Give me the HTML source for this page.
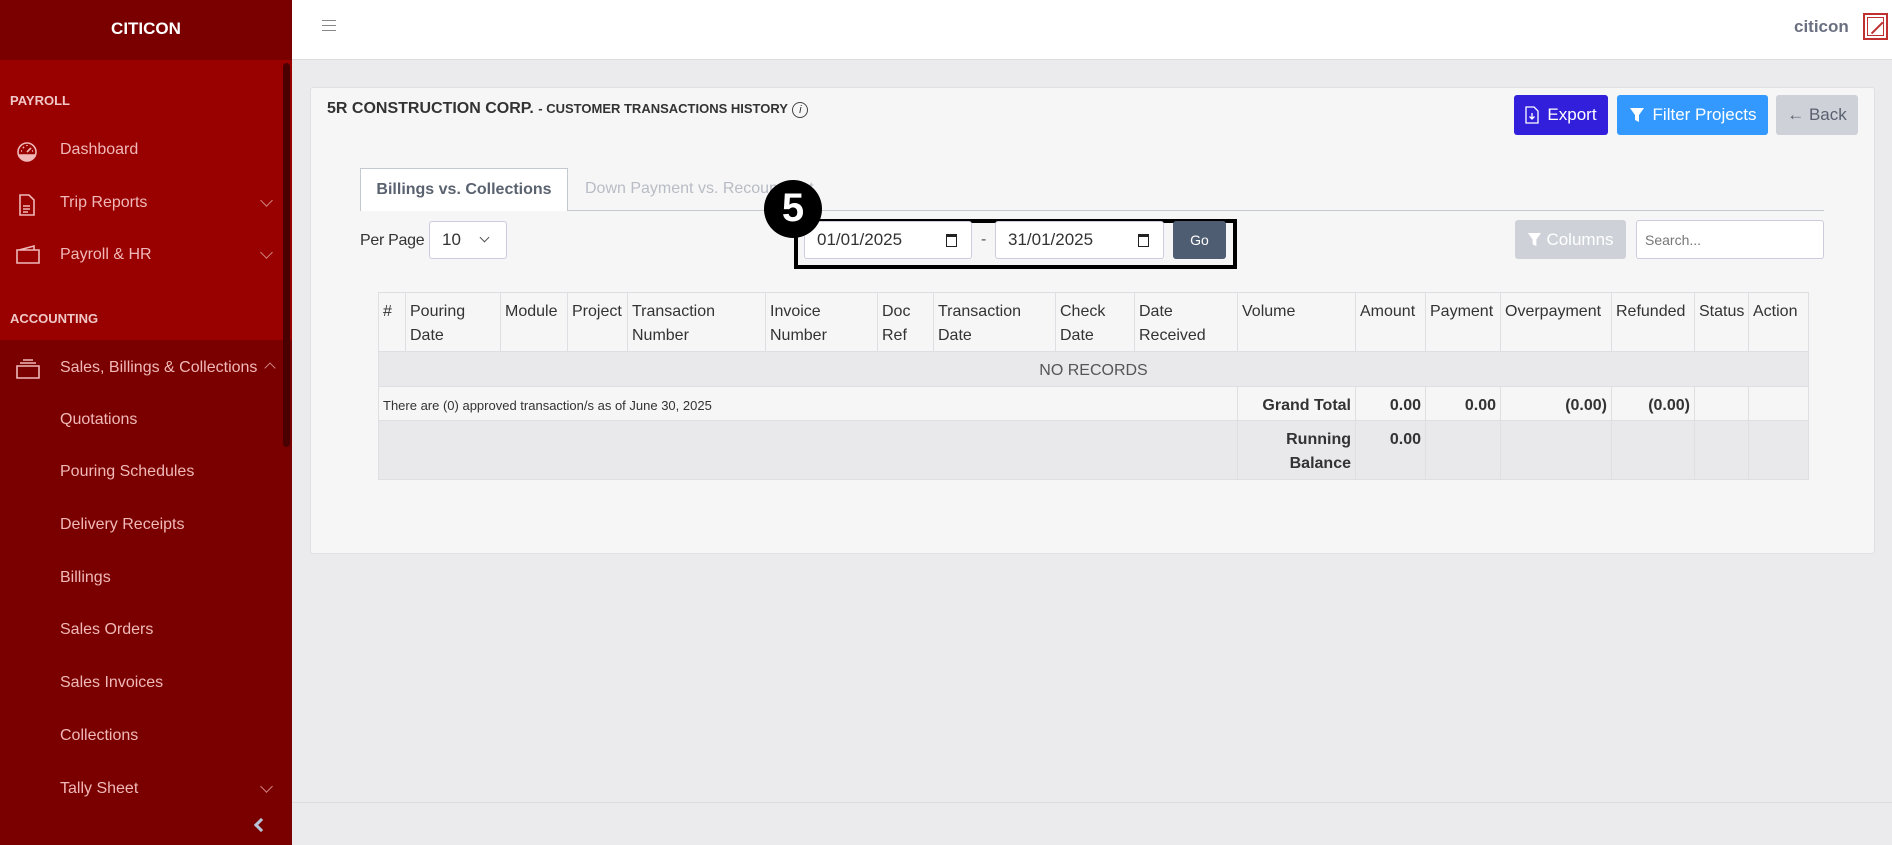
<!DOCTYPE html>
<html><head><meta charset="utf-8"><style>
*{box-sizing:border-box;margin:0;padding:0}
body{width:1892px;height:845px;overflow:hidden;background:#ebebed;font-family:"Liberation Sans",sans-serif;position:relative}
.abs{position:absolute}
#sb{left:0;top:0;width:292px;height:845px;background:#7a0000}
#sbtop{left:0;top:0;width:292px;height:60px;background:#7a0000;color:#fff;font-weight:bold;font-size:17px;text-align:center;line-height:58px}
#sbred{left:0;top:60px;width:292px;height:280px;background:#990000}
.sec{color:#f0c8c8;font-weight:bold;font-size:13px;left:10px}
.it{color:#f0b8b8;font-size:16px;left:60px}
.chev{left:262px;width:9px;height:9px;border-right:1px solid #d08080;border-bottom:1px solid #d08080;transform:rotate(45deg)}
#top{left:292px;top:0;width:1600px;height:60px;background:#fff;border-bottom:1px solid #dcdce0}
#card{left:310px;top:87px;width:1565px;height:467px;background:#f6f6f6;border:1px solid #e0e0e4;border-radius:3px}
.btn{color:#fff;font-size:17px;border-radius:3px;display:flex;align-items:center;justify-content:center;gap:8px}
.inp{background:#fff;border:1px solid #ccd;border-radius:3px;font-size:17px;color:#333;display:flex;align-items:center}
table{border-collapse:collapse;position:absolute;left:378px;top:292px;font-size:16px;color:#333;table-layout:fixed;width:1430px}
td{border:1px solid #dedee3;vertical-align:top;padding:7px 4px 2px;line-height:24px}
</style></head><body>
<div id="sb" class="abs"></div>
<div id="sbred" class="abs"></div>
<div id="sbtop" class="abs">CITICON</div>
<div class="abs" style="left:283px;top:63px;width:7px;height:384px;background:#4a0000;border-radius:4px"></div>
<div class="abs sec" style="top:93px">PAYROLL</div>
<svg class="abs" style="left:15px;top:140px" width="24" height="24" viewBox="0 0 24 24" fill="none" stroke="#f0b8b8" stroke-width="1.6"><circle cx="12" cy="12" r="9"/><path d="M12 12l4-4M6 11h1M8 7l1 1M12 5v1M17 11h1" /><path d="M4 15h16a9 9 0 0 1-16 0z" fill="#f0b8b8"/></svg>
<div class="abs it" style="top:141px">Dashboard</div>
<svg class="abs" style="left:17px;top:193px" width="20" height="24" viewBox="0 0 20 24" fill="none" stroke="#f0b8b8" stroke-width="1.6"><path d="M3 2h9l5 5v15H3z M6 13h7M6 16h7M6 19h5"/></svg>
<div class="abs it" style="top:194px">Trip Reports</div><div class="abs chev" style="top:196px"></div>
<svg class="abs" style="left:15px;top:243px" width="26" height="22" viewBox="0 0 26 22" fill="none" stroke="#f0b8b8" stroke-width="1.6"><path d="M2 7h22v13H2z M4 7l15-4v4"/></svg>
<div class="abs it" style="top:246px">Payroll &amp; HR</div><div class="abs chev" style="top:248px"></div>
<div class="abs sec" style="top:311px">ACCOUNTING</div>
<svg class="abs" style="left:15px;top:358px" width="26" height="22" viewBox="0 0 26 22" fill="none" stroke="#f0b8b8" stroke-width="1.6"><path d="M2 8h22v12H2z M5 5h16 M8 2h10"/></svg>
<div class="abs it" style="top:359px">Sales, Billings &amp; Collections</div>
<div class="abs" style="left:266px;top:364px;width:8px;height:8px;border-left:1px solid #d08080;border-top:1px solid #d08080;transform:rotate(45deg)"></div>
<div class="abs it" style="top:411px">Quotations</div>
<div class="abs it" style="top:463px">Pouring Schedules</div>
<div class="abs it" style="top:516px">Delivery Receipts</div>
<div class="abs it" style="top:569px">Billings</div>
<div class="abs it" style="top:621px">Sales Orders</div>
<div class="abs it" style="top:674px">Sales Invoices</div>
<div class="abs it" style="top:727px">Collections</div>
<div class="abs it" style="top:780px">Tally Sheet</div><div class="abs chev" style="top:782px"></div>
<div class="abs" style="left:256px;top:820px;width:10px;height:10px;border-left:3px solid #b8c4d8;border-bottom:3px solid #b8c4d8;transform:rotate(45deg)"></div>

<div id="top" class="abs"></div>
<div class="abs" style="left:322px;top:20px;width:14px;height:11px;border-top:1.5px solid #888;border-bottom:1.5px solid #888"><div style="margin-top:3.5px;border-top:1.5px solid #888"></div></div>
<div class="abs" style="left:1794px;top:17px;font-weight:bold;font-size:17px;color:#6a7080">citicon</div>
<div class="abs" style="left:1863px;top:13px;width:25px;height:27px;border:2px solid #c03030;padding:2px"><div style="width:100%;height:100%;border:1.5px solid #c03030;position:relative"><div style="position:absolute;left:1px;top:9px;width:16px;height:1.5px;background:#c03030;transform:rotate(-45deg)"></div></div></div>
<div class="abs" style="left:292px;top:802px;width:1600px;height:1px;background:#dcdce0"></div>

<div id="card" class="abs"></div>
<div class="abs" style="left:327px;top:100px;font-weight:bold;font-size:16px;color:#333">5R CONSTRUCTION CORP. <span style="font-size:13px">- CUSTOMER TRANSACTIONS HISTORY</span> <span style="display:inline-block;width:16px;height:16px;border:1px solid #444;border-radius:50%;font-size:11px;text-align:center;line-height:14px;font-style:italic;font-weight:normal">i</span></div>
<div class="abs btn" style="left:1514px;top:95px;width:94px;height:40px;background:#321fdb"><svg width="14" height="18" viewBox="0 0 14 18" fill="none" stroke="#fff" stroke-width="1.3"><path d="M1 1h8l4 4v12H1z M7 7v6M4.5 10.5L7 13l2.5-2.5"/></svg>Export</div>
<div class="abs btn" style="left:1617px;top:95px;width:151px;height:40px;background:#39f"><svg width="16" height="16" viewBox="0 0 16 16"><path d="M1 1h14l-5 7v7l-4-2V8z" fill="#fff"/></svg>Filter Projects</div>
<div class="abs btn" style="left:1776px;top:95px;width:82px;height:40px;background:#ced2d8;color:#5a6070">← Back</div>

<div class="abs" style="left:360px;top:210px;width:1464px;height:1px;background:#c4c9d0"></div>
<div class="abs" style="left:360px;top:168px;width:208px;height:43px;background:#fff;border:1px solid #c4c9d0;border-bottom:none;font-weight:bold;font-size:16px;color:#5a6270;text-align:center;line-height:42px">Billings vs. Collections</div>
<div class="abs" style="left:585px;top:180px;font-size:16px;color:#b8bcc4">Down Payment vs. Recoupment</div>

<div class="abs" style="left:360px;top:232px;font-size:16px;color:#333;letter-spacing:-0.3px">Per Page</div>
<div class="abs inp" style="left:429px;top:221px;width:78px;height:38px;padding-left:12px">10<span style="margin-left:20px;display:inline-block;width:7px;height:7px;border-right:1.3px solid #555;border-bottom:1.3px solid #555;transform:rotate(45deg);margin-top:-5px"></span></div>

<div class="abs" style="left:794px;top:219px;width:443px;height:50px;border:4px solid #000"></div>
<div class="abs inp" style="left:804px;top:221px;width:168px;height:38px;padding-left:12px">01/01/2025<span style="margin-left:auto;margin-right:14px;width:11px;height:13px;border:1.5px solid #222;border-top-width:3px"></span></div>
<div class="abs" style="left:981px;top:231px;color:#555;font-size:16px">-</div>
<div class="abs inp" style="left:995px;top:221px;width:169px;height:38px;padding-left:12px">31/01/2025<span style="margin-left:auto;margin-right:14px;width:11px;height:13px;border:1.5px solid #222;border-top-width:3px"></span></div>
<div class="abs btn" style="left:1173px;top:221px;width:53px;height:38px;background:#4f5d73;font-size:14px">Go</div>
<div class="abs" style="left:764px;top:180px;width:58px;height:58px;border-radius:50%;background:#000;color:#fff;font-weight:bold;font-size:40px;text-align:center;line-height:56px">5</div>

<div class="abs btn" style="left:1515px;top:220px;width:111px;height:39px;background:#ced2d8;gap:4px"><svg width="15" height="15" viewBox="0 0 16 16"><path d="M1 1h14l-5 7v7l-4-2V8z" fill="#fff"/></svg>Columns</div>
<div class="abs inp" style="left:1636px;top:220px;width:188px;height:39px;padding-left:8px;font-size:14px;color:#777">Search...</div>

<table>
<colgroup><col style="width:27px"><col style="width:95px"><col style="width:67px"><col style="width:60px"><col style="width:138px"><col style="width:112px"><col style="width:56px"><col style="width:122px"><col style="width:79px"><col style="width:103px"><col style="width:118px"><col style="width:70px"><col style="width:75px"><col style="width:111px"><col style="width:83px"><col style="width:54px"><col style="width:60px"></colgroup>
<tr style="height:59px"><td>#</td><td>Pouring Date</td><td>Module</td><td>Project</td><td>Transaction Number</td><td>Invoice Number</td><td>Doc Ref</td><td>Transaction Date</td><td>Check Date</td><td>Date Received</td><td>Volume</td><td>Amount</td><td>Payment</td><td>Overpayment</td><td>Refunded</td><td>Status</td><td>Action</td></tr>
<tr style="height:35px;background:#e9e9ec"><td colspan="17" style="text-align:center;color:#555">NO RECORDS</td></tr>
<tr style="height:34px"><td colspan="10" style="font-size:13px;vertical-align:middle">There are (0) approved transaction/s as of June 30, 2025</td><td style="text-align:right;font-weight:bold">Grand Total</td><td style="text-align:right;font-weight:bold">0.00</td><td style="text-align:right;font-weight:bold">0.00</td><td style="text-align:right;font-weight:bold">(0.00)</td><td style="text-align:right;font-weight:bold">(0.00)</td><td></td><td></td></tr>
<tr style="height:59px;background:#e9e9ec"><td colspan="10"></td><td style="text-align:right;font-weight:bold">Running Balance</td><td style="text-align:right;font-weight:bold">0.00</td><td></td><td></td><td></td><td></td><td></td></tr>
</table>
</body></html>
